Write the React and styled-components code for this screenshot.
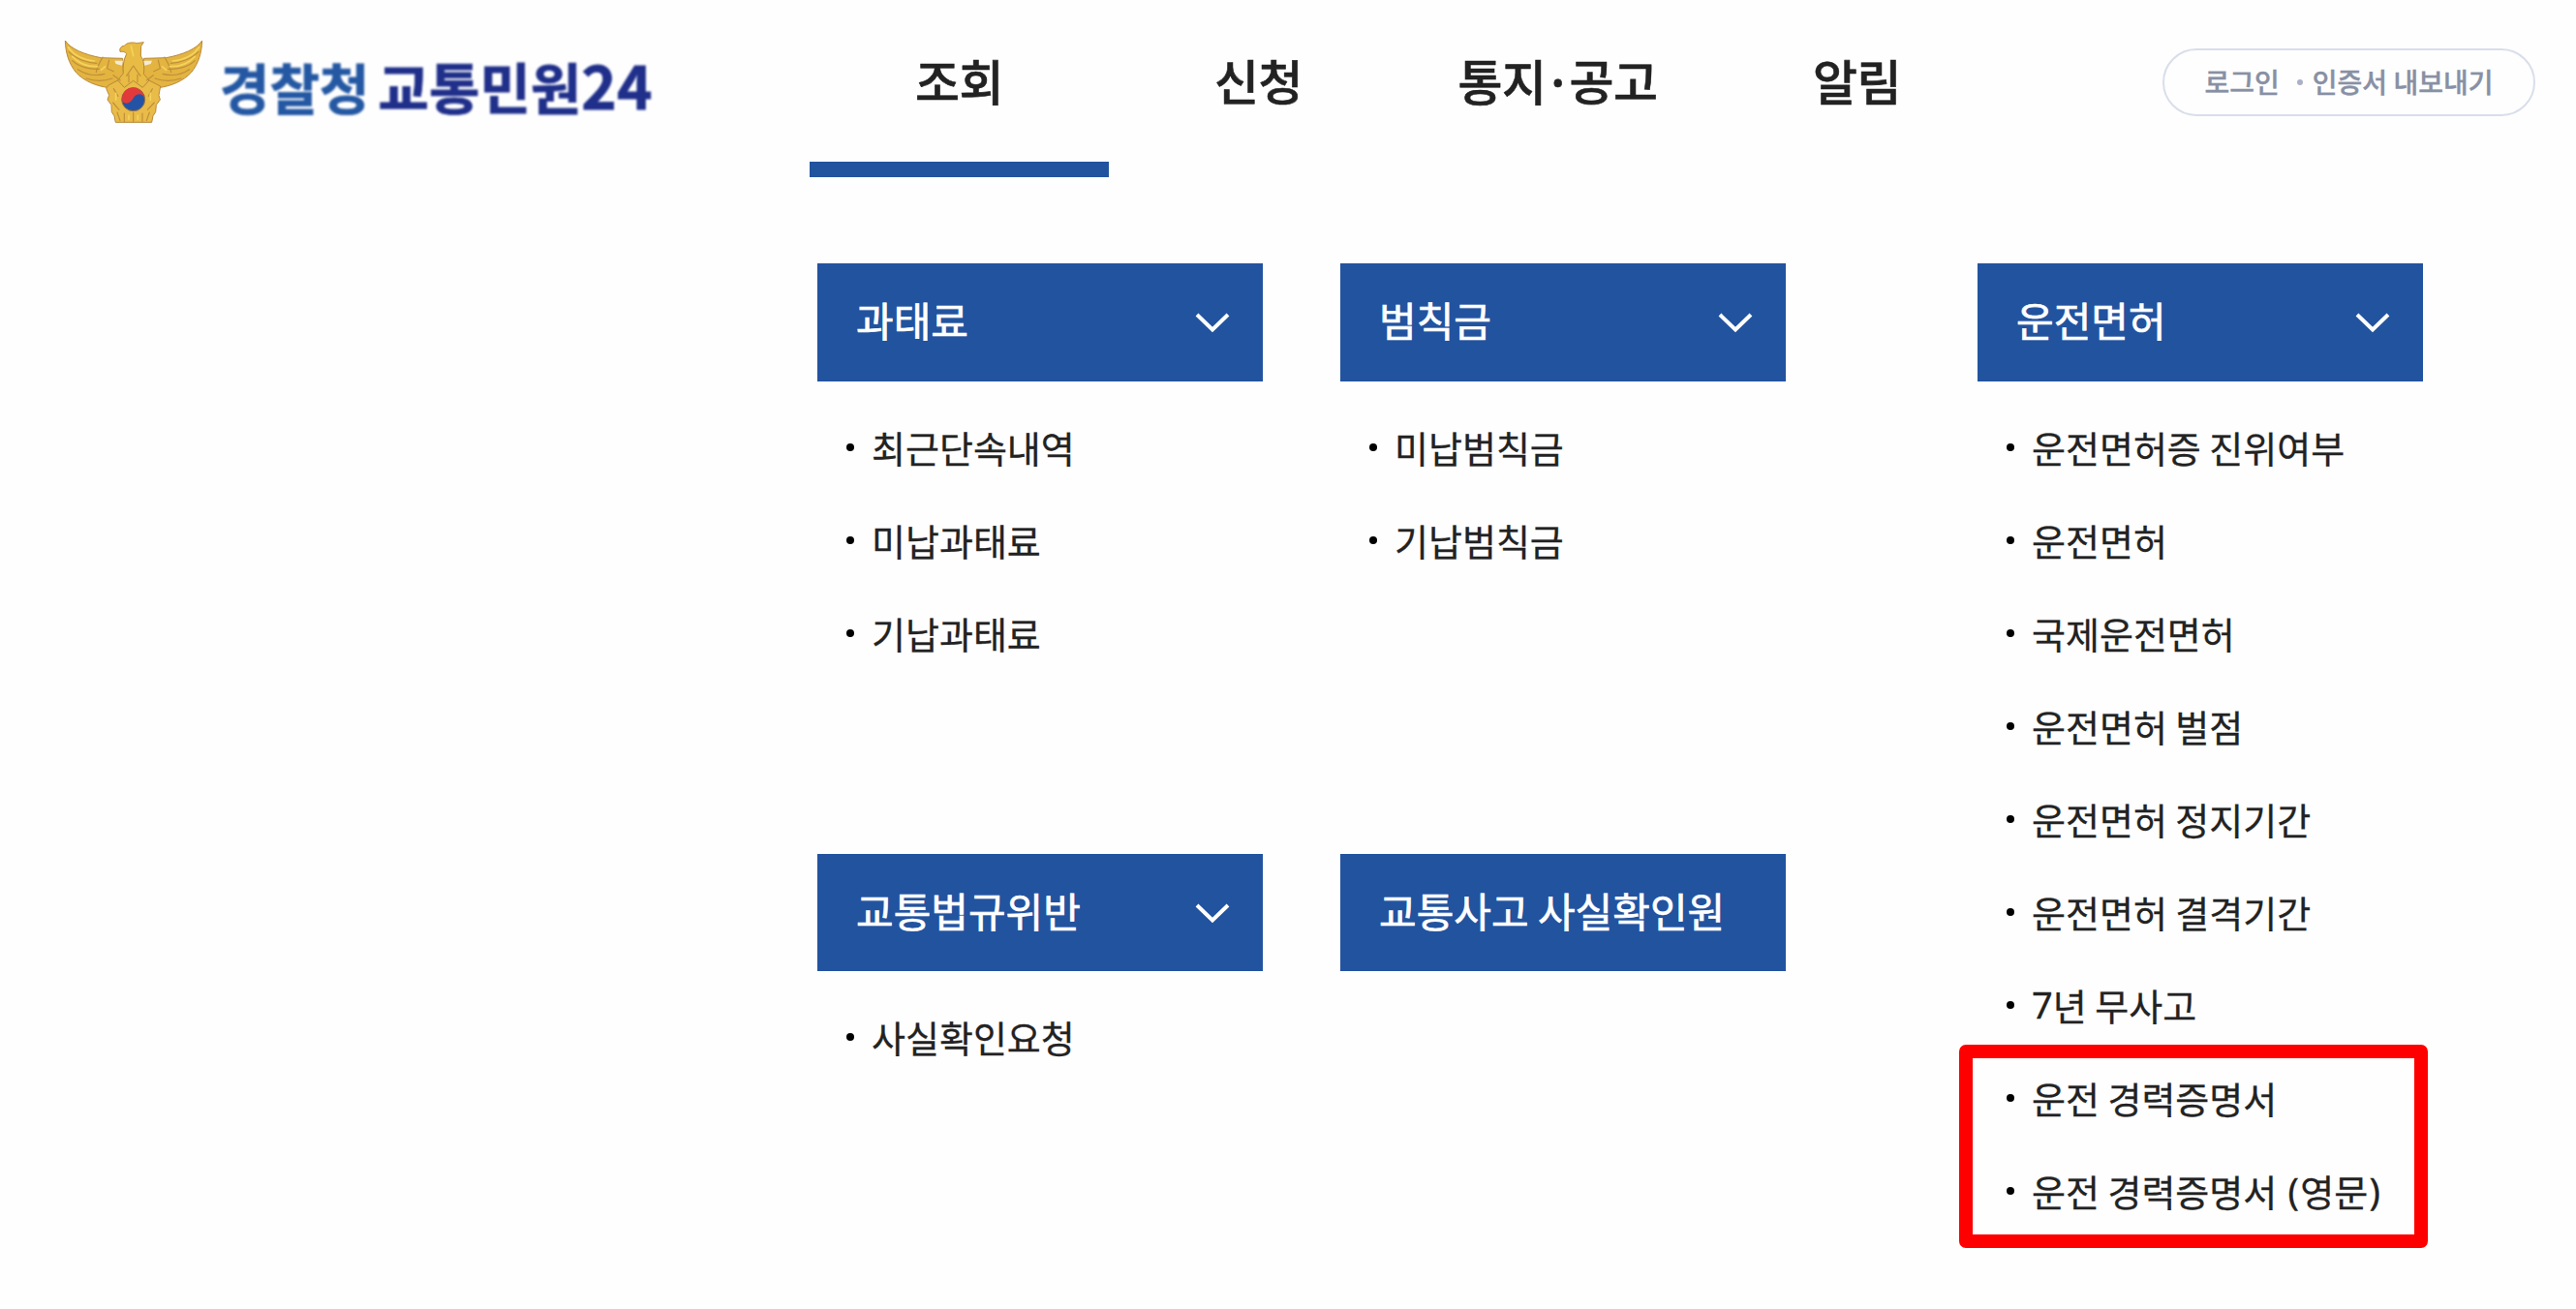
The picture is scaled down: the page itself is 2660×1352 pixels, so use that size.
import React from 'react';
import styled, { createGlobalStyle, css } from 'styled-components';

const colors = {
  primary: '#22539f',
  navy: '#1f2f8a',
  text: '#222222',
  muted: '#8890a4',
  line: '#d9deeb',
  marker: '#ff0000',
};

const GlobalStyle = createGlobalStyle`
  *,
  *::before,
  *::after {
    box-sizing: border-box;
  }

  body {
    background-color: #fefefe;
    color: ${colors.text};
    font-family: 'Noto Sans CJK KR', 'Noto Sans', sans-serif;
    margin: 0;
  }

  ul {
    list-style: none;
    margin: 0;
    padding: 0;
  }

  a {
    color: inherit;
    text-decoration: none;
  }
`;

const Page = styled.div`
  height: 1352px;
  overflow: hidden;
  width: 2660px;
`;

const Header = styled.header`
  align-items: flex-start;
  display: flex;
  height: 183px;
  padding-right: 42px;
`;

const LogoLink = styled.a`
  align-items: flex-start;
  display: flex;
  flex: 0 0 836px;
  padding: 41px 0 0 66px;
`;

const LogoText = styled.span`
  -webkit-text-stroke: 0.8px currentColor;
  align-items: baseline;
  color: ${colors.navy};
  display: flex;
  filter: blur(0.8px);
  font-size: 57px;
  font-weight: 700;
  line-height: 80px;
  margin: 5px 0 0 17px;
  white-space: nowrap;
`;

const LogoAgency = styled.span`
  color: #2458a3;
  font-size: 56px;
  margin-right: 9px;
`;

const LogoNumber = styled.span`
  font-size: 62px;
`;

const Nav = styled.nav`
  flex: 1;
`;

const NavList = styled.ul`
  display: flex;
`;

const NavItem = styled.li`
  -webkit-text-stroke: 0.6px currentColor;
  border-bottom: 16px solid transparent;
  font-size: 50px;
  font-weight: 500;
  height: 183px;
  letter-spacing: -0.5px;
  line-height: 72px;
  padding-top: 46px;
  text-align: center;
  width: 309px;
  ${({ $isActive }) =>
    $isActive &&
    css`
      border-bottom-color: ${colors.primary};
    `}
`;

const MiddleDot = styled.span`
  margin: 0 -2px;
`;

const UserMenu = styled.div`
  -webkit-text-stroke: 0.4px currentColor;
  align-items: center;
  border: 2px solid ${colors.line};
  border-radius: 35px;
  color: ${colors.muted};
  display: flex;
  font-size: 28px;
  font-weight: 500;
  height: 70px;
  justify-content: center;
  margin-top: 50px;
  padding-bottom: 3px;
  white-space: nowrap;
  width: 385px;
`;

const Separator = styled.span`
  background-color: #aab0c6;
  border-radius: 50%;
  height: 6px;
  margin: 2px 10px 0 18px;
  width: 6px;
`;

const Menu = styled.main`
  display: flex;
  gap: 198px;
  padding: 89px 0 0 844px;
`;

const MenuGrid = styled.div`
  column-gap: 80px;
  display: grid;
  grid-template-columns: 460px 460px;
  grid-template-rows: 610px auto;
`;

const MenuGroup = styled.section`
  width: 460px;
`;

const GroupTitle = styled.h2`
  align-items: center;
  background-color: ${colors.primary};
  color: #ffffff;
  display: flex;
  font-size: 42px;
  font-weight: 400;
  height: ${({ $height }) => $height}px;
  justify-content: space-between;
  line-height: 60px;
  margin: 0 0 22px;
  padding: 0 34px 0 40px;
`;

const TitleText = styled.span`
  -webkit-text-stroke: 0.7px currentColor;
  padding-bottom: 6px;
`;

const GroupItem = styled.li`
  -webkit-text-stroke: 0.3px currentColor;
  align-items: center;
  display: flex;
  font-size: 38px;
  height: 96px;
  padding: 0 0 6px 30px;
  white-space: nowrap;

  &::before {
    background-color: #000000;
    border-radius: 50%;
    content: '';
    height: 8px;
    margin: 2px 18px 0 0;
    width: 8px;
  }
`;

// Digits and brackets sit slightly above the Hangul baseline
const Latin = styled.span`
  font-family: 'Noto Sans', sans-serif;
  line-height: 0;
  margin-left: ${({ $before }) => $before || 0}px;
  margin-right: ${({ $after }) => $after || 0}px;
  vertical-align: 2px;
`;

// Frame laid over the two certificate entries, it takes no room in the list
const Highlighted = styled.ul`
  position: relative;

  &::after {
    border: 14px solid ${colors.marker};
    border-radius: 7px;
    content: '';
    height: 210px;
    left: -19px;
    position: absolute;
    top: -9px;
    width: 484px;
  }
`;

const Emblem = () => (
  <svg width="144" height="87" viewBox="50 64 432 261" aria-hidden="true">
    <g stroke="#b9893a" strokeWidth="3" strokeLinejoin="round">
      <path
        fill="#e3b440"
        d="M54 67 C70 92 112 110 165 120 L232 122 L236 200 L190 213 C150 208 112 192 88 166 C64 137 55 102 54 67Z"
      />
      <path
        fill="#e3b440"
        d="M478 67 C462 92 420 110 367 120 L298 122 L294 200 L342 213 C382 208 420 192 444 166 C468 137 477 102 478 67Z"
      />
      <path
        fill="#e9bb48"
        d="M188 205 L236 180 H294 L349 208 L344 236 L348 250 L336 266 L334 288 L326 300 L322 320 L210 320 L206 300 L198 288 L197 266 L185 250 L190 236 L181 215Z"
      />
      <path
        fill="#e8bb45"
        d="M244 108 C240 101 232 100 224 101 C222 91 226 84 237 83 C244 73 262 71 276 75 L297 72 L289 84 L288 115 C298 124 300 153 297 170 L314 190 L294 212 L265 191 L237 212 L217 190 L234 168 C232 145 235 125 244 108Z"
      />
    </g>
    <g fill="none" stroke="#bf8f3a" strokeWidth="3.5" strokeLinecap="round">
      <path d="M65 101 C84 122 119 135 151 137 M76 129 C96 148 130 157 159 155 M93 156 C121 174 153 176 176 170 M119 184 C145 193 175 193 200 184" />
      <path d="M467 101 C448 122 413 135 381 137 M456 129 C436 148 402 157 373 155 M439 156 C411 174 379 176 356 170 M413 184 C387 193 357 193 332 184" />
      <path d="M170 118 C160 136 152 149 150 165 M190 127 L184 153 L204 162 M362 118 C372 136 380 149 382 165 M342 127 L348 153 L328 162" />
      <path d="M265 145 L244 176 M265 145 L287 176 M251 172 V195 M278 172 V195 M203 174 L225 190 M327 174 L306 190" />
      <path d="M204 216 L218 239 M324 216 L312 239 M202 259 L221 281 M330 259 L309 281 M237 292 V318 M265 290 V319 M293 292 V318 M215 289 L224 315 M315 289 L306 315" />
    </g>
    <g fill="none" stroke="#f4d35b" strokeWidth="5" strokeLinecap="round">
      <path d="M63 87 C82 115 117 127 145 130 M76 116 C99 141 128 148 154 147 M469 87 C450 115 415 127 387 130 M456 116 C433 141 404 148 378 147" />
      <path d="M258 84 L265 114 M178 147 L165 158 M354 147 L367 158 M211 230 L211 251 M318 230 L318 251 M251 299 V311 M279 299 V311" />
    </g>
    <path fill="#f3ead7" d="M207 129 L233 129 L230 144 L211 139Z M297 129 L323 129 L319 139 L300 144Z" />
    <circle cx="265" cy="249" r="36" fill="#2453a6" stroke="#9b713b" strokeWidth="3" />
    <path
      fill="#e23a3b"
      d="M231 254 A34.5 34.5 0 1 1 299 243 C292 228 273 230 265 245 C257 262 239 266 231 254Z"
    />
  </svg>
);

const Chevron = () => (
  <svg width="36" height="22" viewBox="0 0 36 22" aria-hidden="true">
    <path d="M2 3 L18 18.5 L34 3" fill="none" stroke="#ffffff" strokeWidth="4" />
  </svg>
);

const navItems = [
  '조회',
  '신청',
  <>
    통지<MiddleDot>·</MiddleDot>공고
  </>,
  '알림',
];

const groups = [
  { title: '과태료', items: ['최근단속내역', '미납과태료', '기납과태료'] },
  { title: '범칙금', items: ['미납범칙금', '기납범칙금'] },
  { title: '교통법규위반', items: ['사실확인요청'], height: 121 },
  { title: '교통사고 사실확인원', items: [], height: 121 },
];

const license = {
  title: '운전면허',
  items: [
    '운전면허증 진위여부',
    '운전면허',
    '국제운전면허',
    '운전면허 벌점',
    '운전면허 정지기간',
    '운전면허 결격기간',
    <>
      <Latin>7</Latin>년 무사고
    </>,
  ],
  highlighted: [
    '운전 경력증명서',
    <>
      운전 경력증명서 <Latin $before={2.8} $after={1.3}>(</Latin>영문
      <Latin $before={1.3}>)</Latin>
    </>,
  ],
};

const renderItems = (items) =>
  items.map((item, index) => (
    <GroupItem key={index}>
      <a href="#">{item}</a>
    </GroupItem>
  ));

const Group = ({ title, items, highlighted, height = 122 }) => (
  <MenuGroup>
    <GroupTitle $height={height}>
      <TitleText>{title}</TitleText>
      {items.length > 0 && <Chevron />}
    </GroupTitle>
    <ul>{renderItems(items)}</ul>
    {highlighted && <Highlighted>{renderItems(highlighted)}</Highlighted>}
  </MenuGroup>
);

const App = () => (
  <Page>
    <GlobalStyle />
    <Header>
      <LogoLink href="#">
        <Emblem />
        <LogoText>
          <LogoAgency>경찰청</LogoAgency>
          교통민원
          <LogoNumber>24</LogoNumber>
        </LogoText>
      </LogoLink>
      <Nav>
        <NavList>
          {navItems.map((item, index) => (
            <NavItem key={index} $isActive={index === 0}>
              <a href="#">{item}</a>
            </NavItem>
          ))}
        </NavList>
      </Nav>
      <UserMenu>
        <a href="#">로그인</a>
        <Separator />
        <a href="#">인증서 내보내기</a>
      </UserMenu>
    </Header>
    <Menu>
      <MenuGrid>
        {groups.map((group) => (
          <Group key={group.title} {...group} />
        ))}
      </MenuGrid>
      <Group {...license} />
    </Menu>
  </Page>
);

export default App;
